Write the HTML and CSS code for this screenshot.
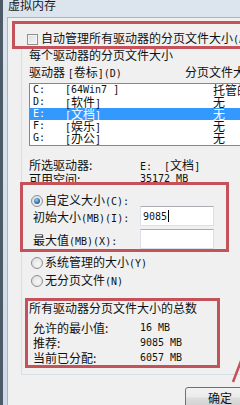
FILE: index.html
```html
<!DOCTYPE html>
<html lang="zh-CN">
<head>
<meta charset="utf-8">
<title>虚拟内存</title>
<link rel="stylesheet" href="styles.css">
</head>
<body>
<div class="win">
  <div class="titlebar">虚拟内存</div>
  <div class="client">
    <div class="mark mark-auto">
      <div class="check-row"><span class="checkbox"></span><span>自动管理所有驱动器的分页文件大小<span class="m">(A)</span></span></div>
    </div>
    <div class="group">
      <div class="legend">每个驱动器的分页文件大小</div>
      <div class="colhead"><span class="col-drive">驱动器 <span class="m">[</span>卷标<span class="m">](D)</span></span><span>分页文件大小<span class="m">(MB)</span></span></div>
      <div class="list">
        <div class="row"><span class="d m">C:</span><span class="l m">[64Win7 ]</span><span class="s">托管的</span></div>
        <div class="row"><span class="d m">D:</span><span class="l"><span class="m">[</span>软件<span class="m">]</span></span><span class="s">无</span></div>
        <div class="row sel"><span class="d m">E:</span><span class="l"><span class="m">[</span>文档<span class="m">]</span></span><span class="s">无</span></div>
        <div class="row"><span class="d m">F:</span><span class="l"><span class="m">[</span>娱乐<span class="m">]</span></span><span class="s">无</span></div>
        <div class="row"><span class="d m">G:</span><span class="l"><span class="m">[</span>办公<span class="m">]</span></span><span class="s">无</span></div>
      </div>
      <div class="info">
        <div class="info-row"><span class="lbl">所选驱动器:</span><span><span class="m">E:&nbsp;&nbsp;[</span>文档<span class="m">]</span></span></div>
        <div class="info-row"><span class="lbl">可用空间:</span><span class="m">35172 MB</span></div>
      </div>
      <div class="mark mark-custom">
        <div class="radio-row"><span class="radio checked"></span><span>自定义大小<span class="m">(C):</span></span></div>
        <div class="field-row first"><span class="flbl">初始大小<span class="m">(MB)(I):</span></span><span class="input"><span class="m">9085</span><span class="caret"></span></span></div>
        <div class="field-row"><span class="flbl">最大值<span class="m">(MB)(X):</span></span><span class="input"></span></div>
      </div>
      <div class="radio-row outer"><span class="radio"></span><span>系统管理的大小<span class="m">(Y)</span></span></div>
      <div class="radio-row outer"><span class="radio"></span><span>无分页文件<span class="m">(N)</span></span></div>
      <div class="mark mark-total">
        <div class="total-title">所有驱动器分页文件大小的总数</div>
        <div class="total-rows">
          <div class="total-row"><span class="tl">允许的最小值:</span><span class="m">16 MB</span></div>
          <div class="total-row"><span class="tl">推荐:</span><span class="m">9085 MB</span></div>
          <div class="total-row"><span class="tl">当前已分配:</span><span class="m">6057 MB</span></div>
        </div>
      </div>
    </div>
    <div class="buttons"><button class="btn">确定</button></div>
  </div>
</div>
<svg class="arrow" width="12" height="26" viewBox="0 0 12 26"><path d="M3 24 L11 3" stroke="#c4525a" stroke-width="2.5" fill="none"/></svg>
</body>
</html>
```
FILE: styles.css
```css
html, body {
  margin: 0;
  padding: 0;
}
body {
  width: 240px;
  height: 405px;
  overflow: hidden;
  position: relative;
  background: #f0f0f0;
  font-family: "Noto Sans CJK SC", "Noto Sans", sans-serif;
  font-size: 12px;
  color: #111;
}
.m {
  font-family: "DejaVu Sans Mono", "Liberation Mono", monospace;
  font-size: 10px;
}
.win {
  height: 405px;
  border-left: 3px solid #4d5b69;
  padding-left: 4px;
  background: linear-gradient(#dce5ee, #cfdbe7);
  display: flex;
  flex-direction: column;
}
.titlebar {
  height: 17px;
  line-height: 12px;
  padding-left: 1px;
  margin-top: -1px;
  color: #1a1a1a;
  white-space: nowrap;
  flex: none;
}
.client {
  flex: 1;
  background: #f0f0f0;
  border-top: 1px solid #a9b5c1;
  border-left: 1px solid #a9b5c1;
  margin-top: 1px;
  white-space: nowrap;
}
.mark {
  position: relative;
  z-index: 2;
  border: 3px solid #c4525a;
}
.mark-auto {
  margin: 3px -20px 0 4px;
  padding: 8px 0 0 12px;
  height: 14px;
}
.check-row {
  display: flex;
  align-items: center;
  line-height: 14px;
  height: 14px;
}
.checkbox {
  width: 9px;
  height: 9px;
  border: 1px solid #8e8f8f;
  background: linear-gradient(135deg, #dcdcdc, #f7f7f7);
  box-shadow: inset 0 0 0 1px #f4f4f4;
  margin-right: 3px;
  flex: none;
}
.group {
  margin-left: 13px;
  border-left: 1px solid #d5dfe5;
  border-bottom: 1px solid #d5dfe5;
  padding: 0 0 6px 7px;
}
.legend {
  margin-top: -1px;
  line-height: 13px;
}
.colhead {
  margin-top: 5px;
  line-height: 12px;
  display: flex;
}
.col-drive {
  width: 156px;
  flex: none;
}
.list {
  margin-top: 3px;
  margin-right: -10px;
  background: #fff;
  border: 1px solid #828790;
  padding: 0 0 1px 0;
}
.row {
  display: flex;
  height: 12px;
  line-height: 12px;
  padding-left: 3px;
}
.row.sel {
  background: #3399ff;
  color: #fff;
}
.row .d {
  width: 32px;
  flex: none;
}
.row .l {
  width: 148px;
  flex: none;
}
.info {
  margin-top: 12px;
}
.info-row {
  display: flex;
  line-height: 14px;
  height: 14px;
}
.lbl {
  width: 111px;
  flex: none;
}
.mark-custom {
  margin: -4px 0 0 -9px;
  width: 195px;
  padding: 9px 0 0 8px;
}
.radio-row {
  display: flex;
  align-items: center;
  height: 14px;
  line-height: 14px;
}
.radio-row.outer {
  margin-top: 4px;
  padding-left: 2px;
}
.radio {
  width: 10px;
  height: 10px;
  border-radius: 50%;
  border: 1px solid #8e8f8f;
  background: radial-gradient(circle at 60% 60%, #f8f8f8, #d9d9d9);
  margin-right: 2px;
  flex: none;
  display: flex;
  align-items: center;
  justify-content: center;
}
.radio.checked::after {
  content: "";
  width: 6px;
  height: 6px;
  border-radius: 50%;
  background: radial-gradient(circle at 40% 35%, #9fd0f5, #2a6cb0 60%, #1d4f86);
}
.field-row {
  display: flex;
  align-items: center;
  height: 20px;
  padding-left: 2px;
  margin-top: 3px;
}
.field-row.first {
  margin-top: -2px;
}
.flbl {
  width: 107px;
  flex: none;
}
.input {
  width: 72px;
  height: 18px;
  background: #fff;
  border: 1px solid #dbe0e6;
  border-top-color: #abadb3;
  display: flex;
  align-items: center;
  padding-left: 2px;
  box-sizing: border-box;
  width: 74px;
  height: 20px;
}
.caret {
  width: 1px;
  height: 12px;
  background: #000;
  margin-left: 1px;
}
.mark-total {
  margin: 10px 0 0 -4px;
  width: 189px;
  height: 64px;
}
.total-title {
  line-height: 13px;
  padding-left: 1px;
}
.total-rows {
  margin-top: 6px;
  padding-left: 5px;
}
.total-row {
  display: flex;
  height: 15px;
  line-height: 15px;
}
.tl {
  width: 107px;
  flex: none;
}
.buttons {
  margin-top: 12px;
  padding-left: 177px;
  display: flex;
}
.btn {
  width: 70px;
  height: 22px;
  flex: none;
  border: 1px solid #707070;
  border-radius: 3px;
  background: linear-gradient(#f2f2f2 0%, #ebebeb 45%, #dddddd 50%, #cfcfcf 100%);
  font-family: "Noto Sans CJK SC", sans-serif;
  font-size: 12px;
  color: #111;
  padding: 0;
  line-height: 20px;
}
.arrow {
  position: absolute;
  left: 230px;
  top: 358px;
}
```
